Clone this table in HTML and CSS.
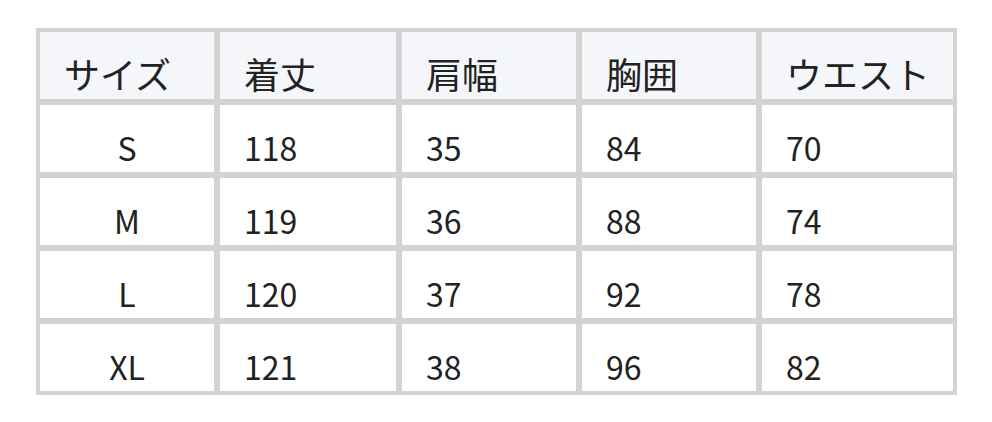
FILE: index.html
```html
<!DOCTYPE html>
<html lang="ja">
<head>
<meta charset="utf-8">
<link rel="stylesheet" href="styles.css">
</head>
<body>
<div class="page">
  <div class="size-table">
    <div class="cell head">サイズ</div>
    <div class="cell head">着丈</div>
    <div class="cell head">肩幅</div>
    <div class="cell head">胸囲</div>
    <div class="cell head">ウエスト</div>

    <div class="cell center">S</div>
    <div class="cell">118</div>
    <div class="cell">35</div>
    <div class="cell">84</div>
    <div class="cell">70</div>

    <div class="cell center">M</div>
    <div class="cell">119</div>
    <div class="cell">36</div>
    <div class="cell">88</div>
    <div class="cell">74</div>

    <div class="cell center">L</div>
    <div class="cell">120</div>
    <div class="cell">37</div>
    <div class="cell">92</div>
    <div class="cell">78</div>

    <div class="cell center">XL</div>
    <div class="cell">121</div>
    <div class="cell">38</div>
    <div class="cell">96</div>
    <div class="cell">82</div>
  </div>
</div>
</body>
</html>
```
FILE: styles.css
```css
html, body {
  margin: 0;
  padding: 0;
  background: #ffffff;
}
.page {
  padding: 28px 0 0 36px;
}
.size-table {
  display: grid;
  grid-template-columns: 174px 176px 174px 174px 191px;
  grid-auto-rows: 67px;
  gap: 6px;
  padding: 4px;
  width: max-content;
  background: #d3d3d3;
  font-family: "Noto Sans CJK JP", "Noto Sans", sans-serif;
  font-size: 32px;
  color: #222222;
}
.cell {
  background: #ffffff;
  padding: 19px 0 0 24px;
  line-height: 46px;
  white-space: nowrap;
}
.cell.head {
  background: #f5f6fa;
  font-size: 36px;
  padding: 18px 0 0 24px;
}
.cell.center {
  padding-left: 0;
  text-align: center;
}
```
